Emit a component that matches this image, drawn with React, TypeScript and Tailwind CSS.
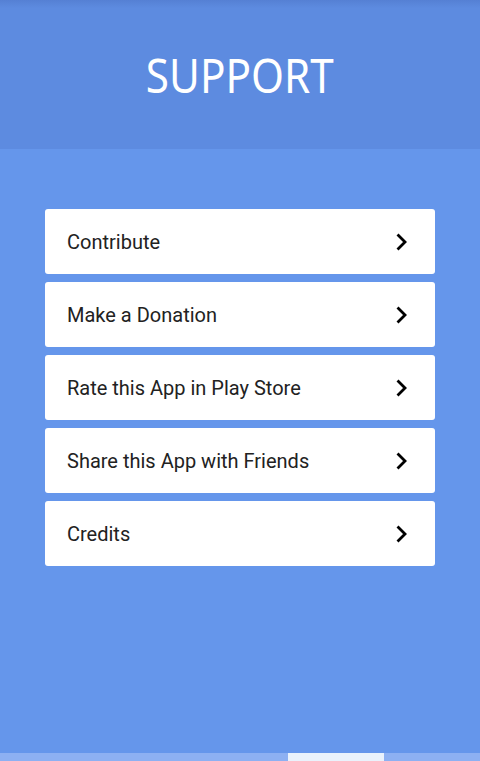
import React from "react";

const items = [
  "Contribute",
  "Make a Donation",
  "Rate this App in Play Store",
  "Share this App with Friends",
  "Credits",
];

function Chevron() {
  return (
    <svg width="14" height="18" viewBox="0 0 14 18" fill="none">
      <path d="M3.5 2.5 L10 9 L3.5 15.5" stroke="#000" strokeWidth="2.8" strokeLinecap="square" />
    </svg>
  );
}

export default function App() {
  return (
    <div className="flex h-[761px] w-[480px] flex-col bg-[#6596eb] font-['Roboto',sans-serif]">
      <div className="relative flex h-[149px] shrink-0 items-center justify-center bg-[#5d8be0]">
        <div className="absolute inset-x-0 top-0 h-[8px] bg-gradient-to-b from-[#5580d4] to-[#5d8be0]" />
        <h1 className="relative scale-x-[0.88] font-['Noto_Sans',sans-serif] text-[48px] leading-none text-white">
          SUPPORT
        </h1>
      </div>

      <div className="flex flex-1 flex-col gap-[8px] px-[45px] pt-[60px]">
        {items.map((label) => (
          <button
            key={label}
            className="flex h-[65px] w-[390px] items-center justify-between rounded-[3px] bg-white pl-[22px] pr-[26px] text-left"
          >
            <span className="text-[20px] font-normal text-[#222222]">{label}</span>
            <Chevron />
          </button>
        ))}
      </div>

      <div className="flex h-[8px] shrink-0 bg-[#8db0f2]">
        <div className="w-[288px]" />
        <div className="w-[96px] bg-[#eaf2fc]" />
      </div>
    </div>
  );
}
